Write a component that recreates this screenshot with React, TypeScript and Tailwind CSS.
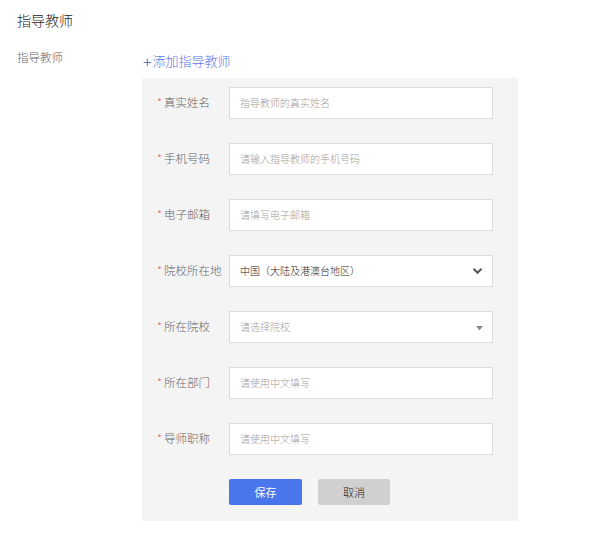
const fields = [
  { label: "真实姓名", placeholder: "指导教师的真实姓名", kind: "input" },
  { label: "手机号码", placeholder: "请输入指导教师的手机号码", kind: "input" },
  { label: "电子邮箱", placeholder: "请填写电子邮箱", kind: "input" },
  { label: "院校所在地", placeholder: "中国（大陆及港澳台地区）", kind: "region" },
  { label: "所在院校", placeholder: "请选择院校", kind: "school" },
  { label: "所在部门", placeholder: "请使用中文填写", kind: "input" },
  { label: "导师职称", placeholder: "请使用中文填写", kind: "input" },
];

function FieldBox({ kind, placeholder }: { kind: string; placeholder: string }) {
  return (
    <div className="flex h-8 w-[264px] items-center justify-between border border-[#dcdcdc] bg-white pl-[10px] pr-[8px]">
      <span
        className={`text-[10px] font-light leading-none ${
          kind === "region" ? "text-[#222]" : "text-[#a0a0a0]"
        }`}
      >
        {placeholder}
      </span>
      {kind === "region" && (
        <svg width="11" height="8" viewBox="0 0 11 8" className="mr-[1px]">
          <path d="M1.5 1.8 L5.5 5.8 L9.5 1.8" fill="none" stroke="#555" strokeWidth="2" />
        </svg>
      )}
      {kind === "school" && (
        <svg width="7" height="5" viewBox="0 0 7 5" className="mr-[1px] mt-[2px]">
          <path d="M0 0 H7 L3.5 4.5 Z" fill="#8a8a8a" />
        </svg>
      )}
    </div>
  );
}

export default function App() {
  return (
    <div
      className="h-[546px] w-[606px] bg-white"
      style={{ fontFamily: '"Noto Sans CJK SC", "Noto Sans", sans-serif' }}
    >
      <h1 className="pl-[17px] pt-[10px] text-[14px] font-light leading-5 text-[#222]">
        指导教师
      </h1>

      <div className="mt-[19px] flex">
        <div className="w-[142px] shrink-0 pl-[17px] text-[11.5px] font-light leading-4 text-[#666]">
          指导教师
        </div>
        <div>
          <button
            type="button"
            className="mt-[2px] flex h-[20px] items-center pl-[1px] text-[13px] font-light text-[#5c78ea]"
          >
            <span className="mr-[1px] text-[16px] leading-none text-[#4a5fb8]">+</span>添加指导教师
          </button>
          <div className="mt-[7px] w-[376px] bg-[#f4f4f4] pb-4 pt-[9px]">
            <div className="flex flex-col gap-6">
              {fields.map((f) => (
                <div key={f.label} className="flex items-start">
                  <div className="flex w-[87px] pl-[15px] pt-[7px] text-[11.5px] font-light leading-4 text-[#666]">
                    <span className="mr-[2px] text-[#f07070]">*</span>
                    {f.label}
                  </div>
                  <FieldBox kind={f.kind} placeholder={f.placeholder} />
                </div>
              ))}
              <div className="flex gap-4 pl-[87px]">
                <button
                  type="button"
                  className="h-[26px] w-[73px] rounded-[2px] bg-[#4a76ec] text-[11px] text-white"
                >
                  保存
                </button>
                <button
                  type="button"
                  className="h-[26px] w-[72px] rounded-[2px] bg-[#d0d0d0] text-[11px] font-light text-[#222]"
                >
                  取消
                </button>
              </div>
            </div>
          </div>
        </div>
      </div>
    </div>
  );
}
